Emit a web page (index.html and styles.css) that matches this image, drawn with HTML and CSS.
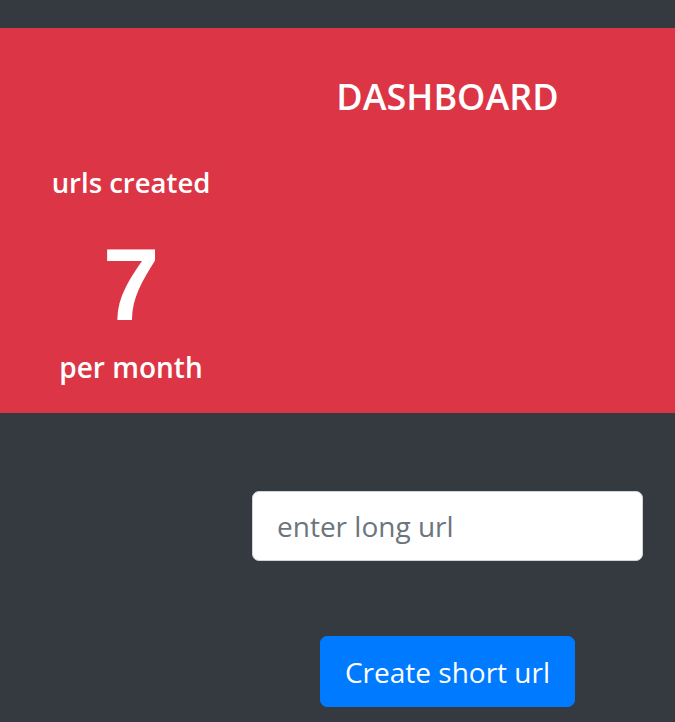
FILE: index.html
```html
<!DOCTYPE html>
<html lang="en">
<head>
<meta charset="utf-8">
<title>Dashboard</title>
<link rel="stylesheet" href="styles.css">
</head>
<body>
<div class="topbar"></div>
<section class="hero">
  <div class="stats">
    <h5 class="stat-label">urls created</h5>
    <div class="stat-value">7</div>
    <h5 class="stat-label stat-label-bottom">per month</h5>
  </div>
  <div class="title-col">
    <h3 class="title">DASHBOARD</h3>
  </div>
</section>
<section class="form-area">
  <form class="url-form">
    <input class="url-input" type="text" placeholder="enter long url">
    <button class="btn-create" type="button">Create short url</button>
  </form>
</section>
</body>
</html>
```

FILE: styles.css
```css
* { box-sizing: border-box; }
html, body {
  margin: 0;
  padding: 0;
}
body {
  background: #343a40;
  font-family: "Open Sans", "Noto Sans", sans-serif;
  color: #fff;
}
.topbar {
  height: 28px;
  background: #343a40;
}
.hero {
  background: #dc3545;
  height: 385px;
  display: grid;
  grid-template-columns: 262px 1fr;
}
.stats {
  text-align: center;
  padding-top: 138px;
}
.stat-label {
  margin: 0;
  font-size: 27.5px;
  line-height: 33px;
  font-weight: 600;
}
.stat-value {
  margin-top: 35px;
  font-family: "Liberation Sans", Arial, sans-serif;
  font-weight: 700;
  font-size: 102px;
  line-height: 102px;
}
.stat-label-bottom {
  margin-top: 14px;
  font-size: 28px;
  line-height: 34px;
}
.title-col {
  padding-right: 42px;
  text-align: center;
}
.title {
  margin: 47px 0 0;
  font-size: 36px;
  line-height: 43px;
  font-weight: 600;
}
.form-area {
  padding: 78px 0 0 220px;
}
.url-form {
  display: flex;
  flex-direction: column;
  align-items: center;
  gap: 75px;
}
.url-input {
  width: 391px;
  height: 70px;
  border: 1px solid #ced4da;
  border-radius: 7px;
  background: #fff;
  padding: 0 24px;
  font-family: inherit;
  font-size: 28px;
  color: #495057;
  outline: none;
}
.url-input::placeholder {
  color: #6c757d;
}
.btn-create {
  height: 71px;
  padding: 0 24px;
  border: 1px solid #007bff;
  border-radius: 7px;
  background: #007bff;
  color: #fff;
  font-family: inherit;
  font-size: 28px;
  cursor: pointer;
}
```
